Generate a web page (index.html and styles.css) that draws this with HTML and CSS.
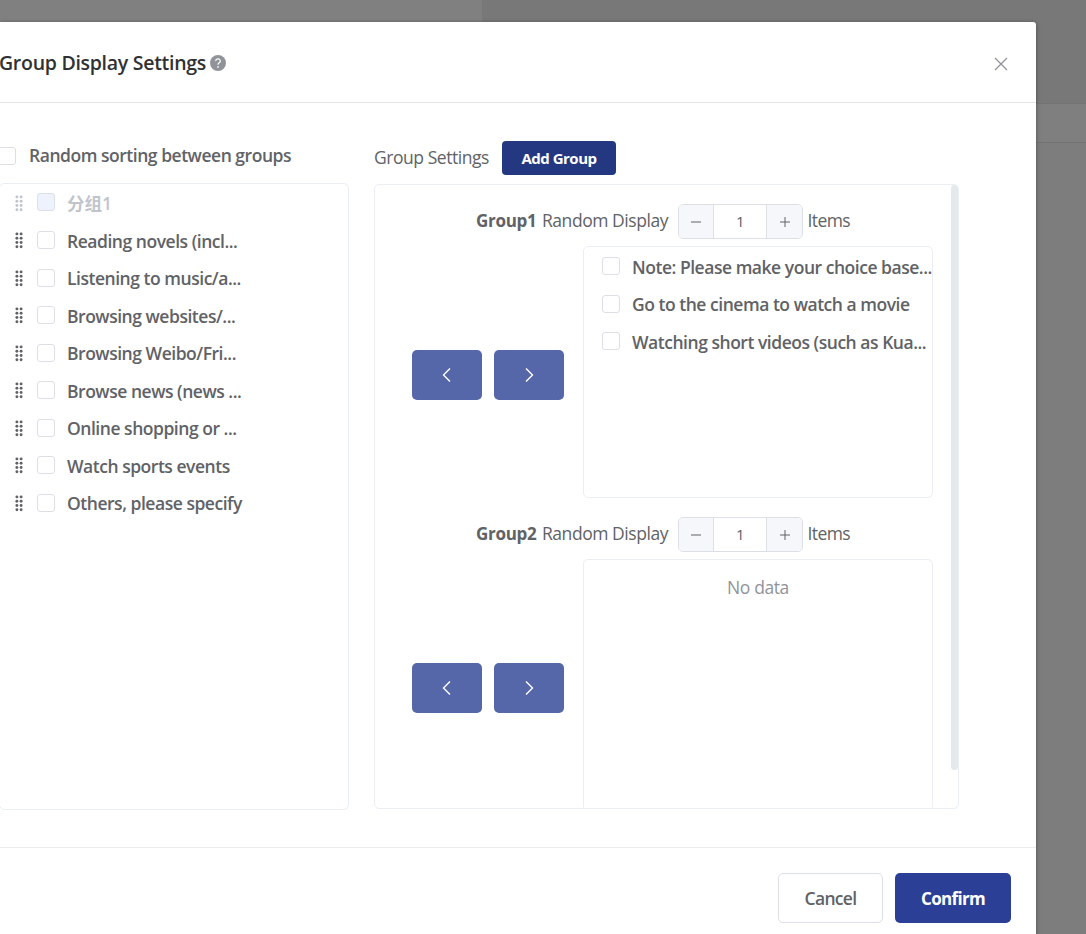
FILE: index.html
```html
<!DOCTYPE html>
<html lang="en">
<head>
<meta charset="utf-8">
<title>Group Display Settings</title>
<link rel="stylesheet" href="styles.css">
</head>
<body>
<svg class="defs" width="0" height="0" aria-hidden="true">
  <symbol id="grip" viewBox="0 0 8 17"><g fill="currentColor"><circle cx="1.9" cy="1.9" r="1.45"/><circle cx="6.1" cy="1.9" r="1.45"/><circle cx="1.9" cy="6.2" r="1.45"/><circle cx="6.1" cy="6.2" r="1.45"/><circle cx="1.9" cy="10.5" r="1.45"/><circle cx="6.1" cy="10.5" r="1.45"/><circle cx="1.9" cy="14.8" r="1.45"/><circle cx="6.1" cy="14.8" r="1.45"/></g></symbol>
  <symbol id="left" viewBox="0 0 18 18"><path d="M12 2.500 5.500 9l6.500 6.500" fill="none" stroke="currentColor" stroke-width="1.4"/></symbol>
  <symbol id="right" viewBox="0 0 18 18"><path d="M6 2.500 12.500 9 6 15.500" fill="none" stroke="currentColor" stroke-width="1.4"/></symbol>
  <symbol id="minus" viewBox="0 0 12 12"><path d="M1 6h10" stroke="currentColor" stroke-width="1"/></symbol>
  <symbol id="plus" viewBox="0 0 12 12"><path d="M1 6h10M6 1v10" stroke="currentColor" stroke-width="1"/></symbol>
</svg>
<div class="page">
  <div class="backdrop"><div class="bd-top"></div><div class="bd-bar"></div></div>
  <main class="dialog">
    <header class="dialog-head">
      <h1 class="title">Group Display Settings</h1>
      <svg class="help" viewBox="0 0 16 16"><circle cx="8" cy="8" r="8" fill="#909399"/><path d="M5.700 6.100a2.300 2.100 0 1 1 3.500 1.700C8.400 8.300 8 8.600 8 9.700" fill="none" stroke="#fff" stroke-width="1.200"/><circle cx="8" cy="11.900" r=".85" fill="#fff"/></svg>
      <svg class="close" viewBox="0 0 14 14"><path d="m1 1 12 12M13 1 1 13" stroke="#909399" stroke-width="1.300"/></svg>
    </header>
    <div class="content">
      <section class="source">
        <label class="sort"><i class="check"></i><span class="strong">Random sorting between groups</span></label>
        <ul class="list">
          <li class="row disabled"><svg class="grip"><use href="#grip"/></svg><i class="check"></i><span class="strong">分组1</span></li>
          <li class="row"><svg class="grip"><use href="#grip"/></svg><i class="check"></i><span class="strong">Reading novels (incl...</span></li>
          <li class="row"><svg class="grip"><use href="#grip"/></svg><i class="check"></i><span class="strong">Listening to music/a...</span></li>
          <li class="row"><svg class="grip"><use href="#grip"/></svg><i class="check"></i><span class="strong">Browsing websites/...</span></li>
          <li class="row"><svg class="grip"><use href="#grip"/></svg><i class="check"></i><span class="strong">Browsing Weibo/Fri...</span></li>
          <li class="row"><svg class="grip"><use href="#grip"/></svg><i class="check"></i><span class="strong">Browse news (news ...</span></li>
          <li class="row"><svg class="grip"><use href="#grip"/></svg><i class="check"></i><span class="strong">Online shopping or ...</span></li>
          <li class="row"><svg class="grip"><use href="#grip"/></svg><i class="check"></i><span class="strong">Watch sports events</span></li>
          <li class="row"><svg class="grip"><use href="#grip"/></svg><i class="check"></i><span class="strong">Others, please specify</span></li>
        </ul>
      </section>
      <section class="target">
        <div class="target-head"><span class="label">Group Settings</span><button class="add">Add Group</button></div>
        <div class="panel">
          <div class="group">
            <div class="group-head"><b class="name">Group1</b><span class="mode">Random Display</span><div class="number"><span class="step"><svg><use href="#minus"/></svg></span><span class="value">1</span><span class="step"><svg><use href="#plus"/></svg></span></div><span class="items">Items</span></div>
            <div class="group-body">
              <div class="moves"><button class="move"><svg><use href="#left"/></svg></button><button class="move"><svg><use href="#right"/></svg></button></div>
              <ul class="box">
                <li class="row"><i class="check"></i><span class="strong">Note: Please make your choice base...</span></li>
                <li class="row"><i class="check"></i><span class="strong">Go to the cinema to watch a movie</span></li>
                <li class="row"><i class="check"></i><span class="strong">Watching short videos (such as Kua...</span></li>
              </ul>
            </div>
          </div>
          <div class="group">
            <div class="group-head"><b class="name">Group2</b><span class="mode">Random Display</span><div class="number"><span class="step"><svg><use href="#minus"/></svg></span><span class="value">1</span><span class="step"><svg><use href="#plus"/></svg></span></div><span class="items">Items</span></div>
            <div class="group-body">
              <div class="moves"><button class="move"><svg><use href="#left"/></svg></button><button class="move"><svg><use href="#right"/></svg></button></div>
              <div class="box empty">No data</div>
            </div>
          </div>
          <div class="scrollbar"></div>
        </div>
      </section>
    </div>
    <footer class="dialog-foot"><button class="btn cancel">Cancel</button><button class="btn confirm">Confirm</button></footer>
  </main>
</div>
</body>
</html>
```
FILE: styles.css
```css
* { box-sizing: border-box; }
body { margin: 0; font-family: "Open Sans", "Noto Sans CJK SC", sans-serif; font-size: 17px; color: #606266; }
ul, h1 { margin: 0; padding: 0; list-style: none; }
button { font: inherit; padding: 0; border: 0; }
svg { display: block; flex: none; }
span, b, h1 { white-space: nowrap; }
.defs { position: absolute; }
.page { position: relative; height: 934px; overflow: hidden; padding-top: 22px; }
.backdrop { position: absolute; inset: 0; background: #7d7d7d; }
.bd-top { height: 103px; background: linear-gradient(90deg, #808080 482px, #787878 482px); }
.bd-bar { height: 40px; background: #7f7f7f; border: solid #737373; border-width: 1px 0; }
.dialog { position: relative; width: 1036px; height: 930px; background: #fff; border-radius: 0 3px 0 0; box-shadow: 0 1px 4px rgba(0, 0, 0, .4); }
.dialog-head { display: flex; align-items: center; height: 81px; border-bottom: 1px solid #e4e5e7; padding-right: 28px; }
.title { width: 210px; margin-left: -1px; font-size: 19.5px; font-weight: 600; letter-spacing: -.28px; color: #303133; }
.help { width: 16px; height: 16px; margin-left: 1px; margin-top: 2px; }
.close { width: 14px; height: 14px; margin: 3px 0 0 auto; }
.content { display: flex; height: 744px; }
.source { width: 349px; padding-top: 34px; }
.sort { display: flex; align-items: center; height: 38px; margin-left: -2px; }
.sort .strong { margin-left: 13px; padding-bottom: 2px; }
.check { flex: none; width: 18px; height: 18px; border: 1px solid #dcdfe6; border-radius: 3px; background: #fff; }
.strong { font-size: 17.5px; font-weight: 600; letter-spacing: -.47px; }
.list { height: 627px; margin-top: 8px; margin-left: -1px; padding-top: .5px; border: 1px solid #ebeef5; border-radius: 5px; }
.row { display: flex; align-items: center; height: 37.5px; }
.row .strong { margin-left: 12px; }
.row .check { margin-top: -1px; }
.list .row { padding-left: 15px; }
.grip { width: 8px; height: 17px; margin-right: 14px; color: #606266; }
.disabled, .disabled .grip { color: #c0c4cc; }
.disabled .strong { padding-bottom: 2px; letter-spacing: 0; }
.row.disabled .check { margin-top: -2px; background: #edf2fc; }
.target { width: 585px; margin-left: 25px; padding-top: 38px; }
.target-head { display: flex; align-items: center; height: 34px; }
.label { width: 128px; padding-bottom: 2px; font-size: 17.5px; letter-spacing: -.45px; }
.add { width: 114px; height: 34px; border-radius: 4px; background: #243882; color: #fff; font-size: 15px; font-weight: 700; letter-spacing: -.5px; }
.panel { position: relative; height: 625px; margin-top: 9px; border: 1px solid #ebeef5; border-radius: 5px; overflow: hidden; }
.group { padding-top: 19px; }
.group-head { display: flex; align-items: center; height: 35px; padding-left: 101px; font-size: 17.5px; letter-spacing: -.45px; }
.name { width: 66px; padding-bottom: 2px; font-size: 17px; letter-spacing: -.3px; }
.mode { width: 136px; padding-bottom: 3px; }
.number { display: grid; grid-template-columns: 34px 54px 35px; width: 125px; height: 35px; border: 1px solid #dcdfe6; border-radius: 5px; overflow: hidden; }
.step { display: grid; place-items: center; background: #f5f7fa; }
.step svg { width: 12px; height: 12px; }
.value { display: grid; place-items: center; padding-bottom: 1px; font-size: 15px; border: solid #dcdfe6; border-width: 0 1px; }
.items { margin-left: 4.5px; padding-bottom: 3px; letter-spacing: -.6px; }
.group-body { display: flex; margin-top: 7px; padding-left: 37px; }
.moves { display: flex; gap: 12px; width: 171px; padding-top: 104px; }
.move { display: grid; place-items: center; width: 70px; height: 50px; border-radius: 5px; background: #5566a9; color: #fff; }
.move svg { width: 18px; height: 18px; }
.box { width: 350px; height: 252px; padding-top: 1px; border: 1px solid #ebeef5; border-radius: 5px; overflow: hidden; }
.box .row { padding-left: 18px; }
.empty { padding-top: 15px; text-align: center; color: #909399; font-size: 17.5px; letter-spacing: -.4px; }
.scrollbar { position: absolute; top: 0; right: 0; width: 7px; height: 585px; border-radius: 4px; background: #e4e9ec; }
.dialog-foot { display: flex; justify-content: flex-end; gap: 12px; height: 107px; padding: 25px 25px 0 0; border-top: 1px solid #ebeced; }
.btn { height: 50px; border-radius: 5px; }
.cancel { width: 105px; border: 1px solid #dcdfe6; background: #fff; color: #606266; font-size: 17.5px; font-weight: 600; letter-spacing: -.7px; }
.confirm { width: 116px; background: #2b3f96; color: #fff; font-weight: 700; letter-spacing: -.7px; }
```
